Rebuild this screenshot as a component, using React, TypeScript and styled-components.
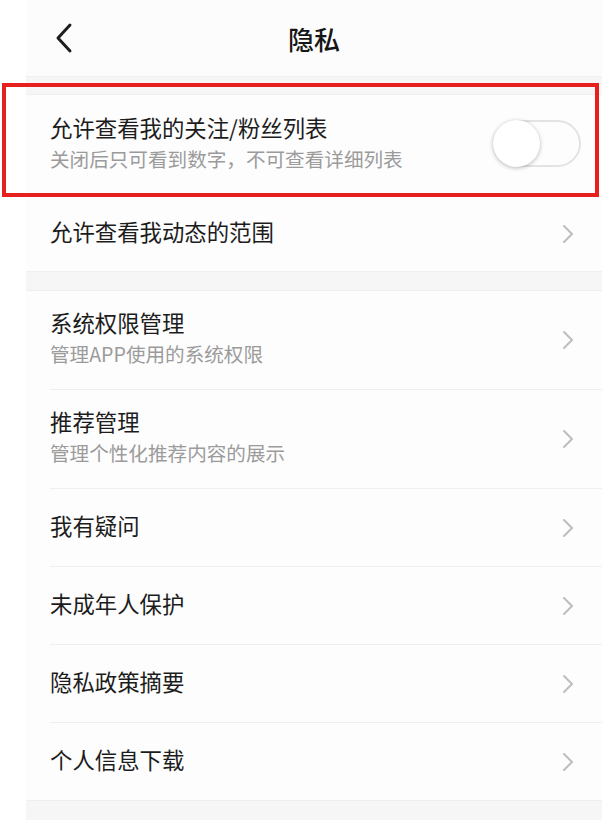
import React from "react";
import styled, { createGlobalStyle } from "styled-components";

const GlobalStyle = createGlobalStyle`
  html, body {
    margin: 0;
    padding: 0;
    background: #ffffff;
  }
  body {
    font-family: "Noto Sans CJK SC", "Noto Sans", sans-serif;
    -webkit-font-smoothing: antialiased;
  }
`;

const Page = styled.div`
  position: relative;
  width: 602px;
  height: 820px;
  overflow: hidden;
  padding-left: 26px;
  box-sizing: border-box;
  background: #ffffff;
`;

const Screen = styled.div`
  height: 100%;
  background: #f6f6f6;
`;

const Header = styled.header`
  display: grid;
  grid-template-columns: 1fr auto 1fr;
  align-items: center;
  height: 77px;
  background: #fcfcfc;
  border-bottom: 1px solid #f0f0f0;
  box-sizing: border-box;
`;

const BackButton = styled.button`
  justify-self: start;
  display: flex;
  align-items: center;
  margin-left: 27px;
  margin-top: -1px;
  padding: 0;
  border: 0;
  background: none;
  cursor: pointer;
`;

const Title = styled.h1`
  margin: 0;
  font-size: 26px;
  font-weight: 500;
  color: #161616;
  letter-spacing: 0;
`;

const Group = styled.section<{ $gap: number }>`
  margin-top: ${(p) => p.$gap}px;
  background: #fdfdfd;
  border-top: 1px solid #efefef;
  border-bottom: 1px solid #efefef;
`;

const Row = styled.div`
  padding-left: 24px;
  &:not(:last-child) > div {
    border-bottom: 1px solid #eeeeee;
  }
`;

const RowInner = styled.div<{ $h: number }>`
  display: flex;
  align-items: center;
  justify-content: space-between;
  height: ${(p) => p.$h - 5}px;
  padding: 0 27px 5px 0;
  box-sizing: content-box;
`;

const Texts = styled.div`
  display: flex;
  flex-direction: column;
  gap: 3px;
`;

const ItemTitle = styled.div`
  font-size: 22.4px;
  line-height: 30px;
  color: #1c1c1c;
`;

const ItemSub = styled.div`
  font-size: 19.6px;
  line-height: 28px;
  color: #9b9b9b;
`;

const Toggle = styled.div`
  position: relative;
  width: 88px;
  height: 47px;
  margin-right: -6px;
  margin-top: 2px;
  border: 2px solid #e3e3e3;
  border-radius: 24px;
  background: #fdfdfd;
  box-sizing: border-box;
`;

const Knob = styled.span`
  position: absolute;
  left: -2px;
  top: -2px;
  width: 47px;
  height: 47px;
  border-radius: 50%;
  background: #ffffff;
  box-shadow: 0 1px 4px rgba(0, 0, 0, 0.28);
`;

const Highlight = styled.div`
  position: absolute;
  left: 2px;
  top: 83px;
  width: 597px;
  height: 114px;
  border: 4px solid #e6201f;
  box-sizing: border-box;
  pointer-events: none;
`;

const ChevronBox = styled.span`
  display: flex;
  margin-top: 5px;
`;

const Chevron = () => (
  <ChevronBox>
    <svg width="14" height="20" viewBox="0 0 14 20">
      <path d="M3 2 L11 10 L3 18" fill="none" stroke="#bdbdbd" strokeWidth="2" strokeLinecap="round" strokeLinejoin="round" />
    </svg>
  </ChevronBox>
);

const BackIcon = () => (
  <svg width="22" height="32" viewBox="0 0 22 32">
    <path d="M17 3 L5 16 L17 29" fill="none" stroke="#1e1e1e" strokeWidth="3" strokeLinecap="round" strokeLinejoin="round" />
  </svg>
);

type Item = { title: string; sub?: string };

const group2: Item[] = [
  { title: "系统权限管理", sub: "管理APP使用的系统权限" },
  { title: "推荐管理", sub: "管理个性化推荐内容的展示" },
  { title: "我有疑问" },
  { title: "未成年人保护" },
  { title: "隐私政策摘要" },
  { title: "个人信息下载" },
];

export default function App() {
  return (
    <Page>
      <GlobalStyle />
      <Screen>
        <Header>
          <BackButton type="button" aria-label="返回">
            <BackIcon />
          </BackButton>
          <Title>隐私</Title>
          <span />
        </Header>

        <Group $gap={17}>
          <Row>
            <RowInner $h={100}>
              <Texts>
                <ItemTitle>允许查看我的关注/粉丝列表</ItemTitle>
                <ItemSub>关闭后只可看到数字，不可查看详细列表</ItemSub>
              </Texts>
              <Toggle>
                <Knob />
              </Toggle>
            </RowInner>
          </Row>
          <Row>
            <RowInner $h={75}>
              <ItemTitle>允许查看我动态的范围</ItemTitle>
              <Chevron />
            </RowInner>
          </Row>
        </Group>

        <Group $gap={18}>
          {group2.map((item) => (
            <Row key={item.title}>
              <RowInner $h={item.sub ? 98 : 77}>
                {item.sub ? (
                  <Texts>
                    <ItemTitle>{item.title}</ItemTitle>
                    <ItemSub>{item.sub}</ItemSub>
                  </Texts>
                ) : (
                  <ItemTitle>{item.title}</ItemTitle>
                )}
                <Chevron />
              </RowInner>
            </Row>
          ))}
        </Group>
      </Screen>
      <Highlight />
    </Page>
  );
}
